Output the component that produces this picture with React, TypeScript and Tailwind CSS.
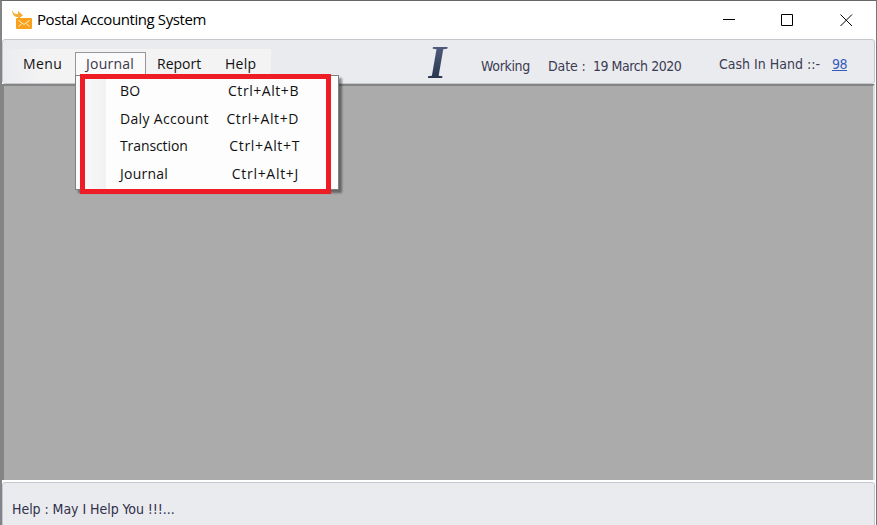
import React from "react";

const items = [
  { label: "BO", key: "Ctrl+Alt+B", right: "mr-[39px]", ls: "tracking-[0.1px]", ks: "tracking-[0.55px]" },
  { label: "Daly Account", key: "Ctrl+Alt+D", right: "mr-[39px]", ls: "tracking-[0.33px]", ks: "tracking-[0.6px]" },
  { label: "Transction", key: "Ctrl+Alt+T", right: "mr-[38px]", ls: "tracking-[-0.1px]", ks: "tracking-[0.65px]" },
  { label: "Journal", key: "Ctrl+Alt+J", right: "mr-[39px]", ls: "tracking-[0.25px]", ks: "tracking-[0.7px]" },
];

function MailIcon() {
  return (
    <svg className="ml-[9px] mt-[9px] h-5 w-[22px] shrink-0" viewBox="0 0 22 20">
      <path d="M1 0C2.5 3.5 5 4.5 7 4V1l5 4.3-5 4V7C3.5 7.5 1 4 1 0Z" fill="#f7ad35" />
      <rect x="5" y="8" width="16" height="11" rx="1" fill="#f9a11b" />
      <path d="M7.5 10.5 13 14.5 18.5 10.5M7.5 16.5 10.5 14M18.5 16.5 15.5 14" fill="none" stroke="#fff3dc" strokeWidth="1" />
    </svg>
  );
}

function Dropdown() {
  return (
    <div className="absolute left-[75px] top-[75px] h-[115px] w-[264px] border border-[#808080] bg-[#fdfdfd] shadow-[3px_3px_2px_rgba(0,0,0,0.4)]">
      <div className="flex h-full">
        <div className="w-[30px] bg-gradient-to-r from-[#fcfcfc] to-[#f1f1f1]" />
        <div className="flex flex-1 flex-col pt-[1px]">
          {items.map((i) => (
            <div key={i.label} className="flex h-[27.5px] items-center justify-between whitespace-nowrap pl-[14px] text-[14px] text-[#111]">
              <span className={i.ls}>{i.label}</span>
              <span className={i.right}>
                <span className={i.ks}>{i.key}</span>
              </span>
            </div>
          ))}
        </div>
      </div>
    </div>
  );
}

export default function App() {
  return (
    <div className="relative flex h-[525px] w-[877px] flex-col overflow-hidden border-l-2 border-r border-t border-l-[#828488] border-r-[#77777b] border-t-[#68686b] bg-white font-['Open_Sans','Noto_Sans',sans-serif]">
      <header className="flex h-[38px] shrink-0 bg-white text-black">
        <MailIcon />
        <h1 className="ml-1 mt-[7px] whitespace-nowrap text-[15px] leading-[22px] tracking-[-0.41px]">Postal Accounting System</h1>
        <svg className="ml-auto mr-[23px] mt-3 h-[14px] w-[130px]" viewBox="0 0 130 14" fill="none" stroke="#000" strokeWidth="1">
          <path d="M0 6.5H12M58.5 1.5H69.5V12.5H58.5ZM117.5 1.5 129 13M129 1.5 117.5 13" />
        </svg>
      </header>
      <section className="mr-px flex h-[45px] shrink-0 rounded-[3px] border border-[#c4c7cb] bg-[#eaebef]">
        <nav className="mt-[9px] flex h-[34px] w-[268px] shrink-0 bg-gradient-to-r from-[#ebecef] to-[#f3f3f4] to-15% text-[14px] leading-[20px] text-[#111]">
          <span className="ml-[20px] mt-[5px] w-[52px] tracking-[0.4px]">Menu</span>
          <span className="mt-[3px] h-[24px] w-[71px] border border-b-0 border-[#96979b] bg-[#fafafb] pl-[10px] pt-[1px] tracking-[0.25px] text-[#3c3649]">Journal</span>
          <span className="ml-[11px] mt-[5px] w-[68px]">Report</span>
          <span className="mt-[5px] tracking-[0.3px]">Help</span>
        </nav>
        <div className="flex flex-1 whitespace-nowrap font-['DejaVu_Sans_Condensed','DejaVu_Sans',sans-serif] text-[14px] leading-[18px] text-[#3b3b52]">
          <span className="ml-[157px] mt-[-2px] w-[53px] bg-gradient-to-b from-[#5a668a] to-[#253047] bg-clip-text font-['Liberation_Serif',serif] text-[47px] font-bold italic leading-[48px] text-transparent">I</span>
          <span className="mt-[17px] w-[67px] tracking-[-0.35px]">Working</span>
          <span className="mt-[17px] w-[45px] tracking-[-0.1px]">Date :</span>
          <span className="mt-[17px] w-[126px] tracking-[-0.47px]">19 March 2020</span>
          <span className="mt-[15px] w-[113px]">Cash In Hand ::-</span>
          <a className="mt-[15px] tracking-[-0.5px] text-[#365bbb] underline">98</a>
        </div>
      </section>
      <main className="mr-px h-[396px] shrink-0 border-l-2 border-r-2 border-t-2 border-l-[#858585] border-r-[#dedede] border-t-[#858585] bg-[#ababab]" />
      <footer className="mr-px mt-[2px] h-[60px] shrink-0 rounded-[3px] border border-[#c4c7cf] bg-[#eaebef] pl-[9px] pt-[17px] font-['DejaVu_Sans_Condensed','DejaVu_Sans',sans-serif] text-[14px] leading-[18px] tracking-[-0.05px] text-[#303049]">
        Help : May I Help You !!!...
      </footer>
      <div className="absolute -left-[2px] -top-px">
        <Dropdown />
        <div className="absolute left-[80px] top-[74px] h-[120px] w-[251px] border-[5px] border-[#ee1c25]" />
      </div>
    </div>
  );
}
